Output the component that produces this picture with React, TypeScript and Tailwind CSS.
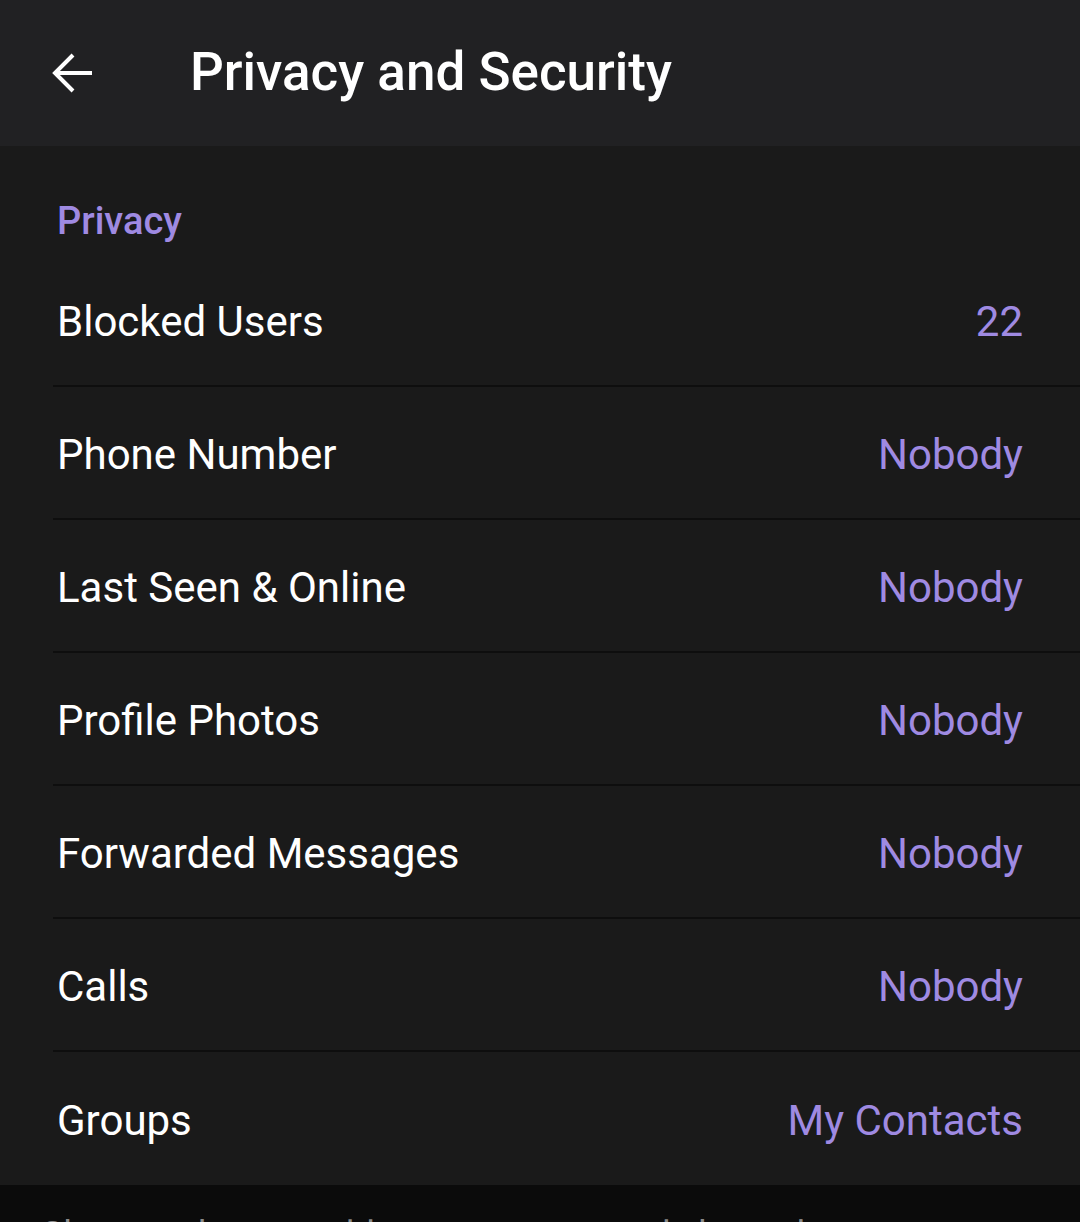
import React from "react";

const rows: { label: string; value: string }[] = [
  { label: "Blocked Users", value: "22" },
  { label: "Phone Number", value: "Nobody" },
  { label: "Last Seen & Online", value: "Nobody" },
  { label: "Profile Photos", value: "Nobody" },
  { label: "Forwarded Messages", value: "Nobody" },
  { label: "Calls", value: "Nobody" },
  { label: "Groups", value: "My Contacts" },
];

export default function App() {
  return (
    <div
      className="w-[1080px] h-[1222px] overflow-hidden bg-[#0b0b0b] flex flex-col"
      style={{ fontFamily: "Roboto, 'Noto Sans', sans-serif" }}
    >
      <div className="h-[146px] shrink-0 bg-[#212123] flex items-center">
        <div className="pl-[52px] flex items-center">
          <svg width="42" height="42" viewBox="0 0 42 42">
            <path
              d="M40 21H4M21 3L3 21l18 18"
              fill="none"
              stroke="#ffffff"
              strokeWidth="4"
              strokeLinecap="butt"
              strokeLinejoin="miter"
            />
          </svg>
        </div>
        <div className="ml-[96px] text-white text-[53px] font-medium leading-none tracking-[0px] pb-[2px]">
          Privacy and Security
        </div>
      </div>
      <div className="bg-[#1a1a1a] shrink-0">
        <div className="h-[108px] flex items-center pl-[57px] pt-[42px]">
          <span className="text-[#9f8ae2] text-[38px] font-medium leading-none">
            Privacy
          </span>
        </div>
        {rows.map((r, i) => (
          <div key={r.label} className="pl-[53px]">
            <div
              className={
                i < rows.length - 1
                  ? "h-[133px] flex items-center justify-between pl-[4px] pr-[57px] pt-[4px] border-b-2 border-[#0e0e0e]"
                  : "h-[133px] flex items-center justify-between pl-[4px] pr-[57px] pt-[4px]"
              }
            >
              <span className="text-white text-[42px] leading-none">{r.label}</span>
              <span className="text-[#9f8ae2] text-[42px] leading-none">{r.value}</span>
            </div>
          </div>
        ))}
      </div>
      <div className="pt-[32px] pl-[40px] text-[#8a8a8a] text-[36px] leading-none whitespace-nowrap">
        Change who can add you to groups and channels.
      </div>
    </div>
  );
}
